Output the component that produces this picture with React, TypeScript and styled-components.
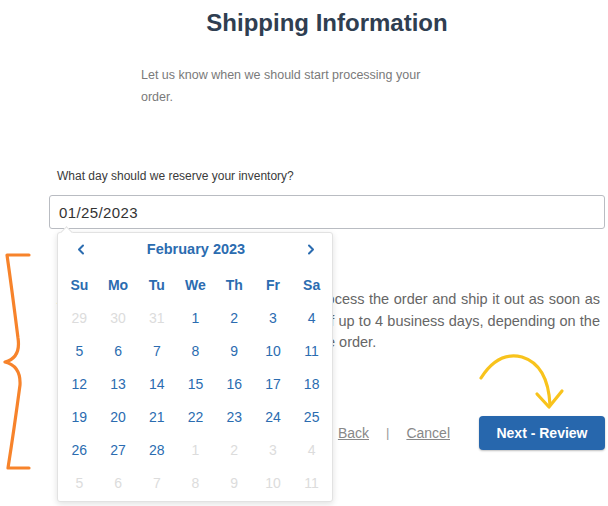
import React from 'react';
import styled, { createGlobalStyle } from 'styled-components';

const GlobalStyle = createGlobalStyle`
  html, body {
    margin: 0;
    padding: 0;
    background: #ffffff;
  }

  body {
    font-family: 'Liberation Sans', Arial, sans-serif;
    color: #333;
  }
`;

const Page = styled.div`
  width: 608px;
  height: 506px;
  overflow: hidden;
  position: relative;
  box-sizing: border-box;
  padding: 8px 3px 0 49px;
`;

const Title = styled.h1`
  margin: 0;
  font-size: 24px;
  line-height: 30px;
  font-weight: 700;
  text-align: center;
  color: #2f3e51;
`;

const Subtitle = styled.p`
  margin: 26px 0 0 92px;
  width: 300px;
  font-size: 12.5px;
  line-height: 22px;
  color: #7a7a7a;
`;

const Label = styled.label`
  display: block;
  margin: 58px 0 0 8px;
  font-size: 12px;
  line-height: 20px;
  color: #3a3a3a;
`;

const Field = styled.div`
  position: relative;
  margin-top: 9px;
`;

const Input = styled.input`
  width: 100%;
  height: 34px;
  box-sizing: border-box;
  padding: 0 9px;
  border: 1px solid #b9bcc2;
  border-radius: 3px;
  font-family: inherit;
  font-size: 15px;
  letter-spacing: 0.4px;
  color: #333;
  outline: none;
`;

const Notice = styled.p`
  margin: 60px 0 0 8px;
  width: 543px;
  font-size: 14.5px;
  line-height: 21.5px;
  color: #666;
`;

const Line = styled.span<{ $fill?: boolean }>`
  display: block;
  white-space: nowrap;
  text-align: left;
  text-align-last: ${(p) => (p.$fill ? 'justify' : 'left')};
`;

const Actions = styled.div`
  display: flex;
  align-items: center;
  justify-content: flex-end;
  margin-top: 62px;
`;

const TextLink = styled.a`
  font-size: 14px;
  color: #888;
  text-decoration: underline;
  cursor: pointer;
`;

const Divider = styled.span`
  margin: 0 17px;
  font-size: 13px;
  color: #9a9a9a;
`;

const PrimaryButton = styled.button`
  margin-left: 29px;
  width: 126px;
  height: 34px;
  border: none;
  border-radius: 4px;
  background: #2767ad;
  color: #fff;
  font-family: inherit;
  font-size: 14px;
  font-weight: 700;
  box-shadow: 0 1px 2px rgba(0, 0, 0, 0.25);
  cursor: pointer;
`;

const Popover = styled.div`
  position: absolute;
  top: 37px;
  left: 8px;
  width: 276px;
  height: 270px;
  box-sizing: border-box;
  padding: 4px 1px 0 2px;
  background: #fff;
  border: 1px solid #e2e2e2;
  border-radius: 3px;
  box-shadow: 0 2px 6px rgba(0, 0, 0, 0.12);

  &::before {
    content: '';
    position: absolute;
    top: -5px;
    left: 4px;
    width: 8px;
    height: 8px;
    background: #fff;
    border-left: 1px solid #e2e2e2;
    border-top: 1px solid #e2e2e2;
    transform: rotate(45deg);
  }
`;

const CalHeader = styled.div`
  display: flex;
  align-items: center;
  justify-content: space-between;
  height: 24px;
  padding: 0 16px 0 17px;
  color: #2b6cb0;
`;

const MonthName = styled.span`
  font-size: 14.5px;
  font-weight: 700;
`;

const NavArrow = styled.svg`
  width: 8px;
  height: 11px;
  cursor: pointer;
`;

const Grid = styled.div`
  display: grid;
  grid-template-columns: repeat(7, 1fr);
  grid-auto-rows: 33px;
  margin-top: 7px;
`;

const DayName = styled.span`
  display: flex;
  align-items: center;
  justify-content: center;
  font-size: 14px;
  font-weight: 700;
  color: #2b6cb0;
`;

const Day = styled.span<{ $muted?: boolean }>`
  display: flex;
  align-items: center;
  justify-content: center;
  font-size: 14px;
  color: ${(p) => (p.$muted ? '#dcdcdc' : '#2b6cb0')};
`;

const Annotation = styled.svg`
  position: absolute;
  pointer-events: none;
`;

const dayNames = ['Su', 'Mo', 'Tu', 'We', 'Th', 'Fr', 'Sa'];

const buildDays = () => {
  const days: { n: number; muted: boolean }[] = [];
  [29, 30, 31].forEach((n) => days.push({ n, muted: true }));
  for (let n = 1; n <= 28; n++) days.push({ n, muted: false });
  for (let n = 1; n <= 11; n++) days.push({ n, muted: true });
  return days;
};

const App = () => (
  <>
    <GlobalStyle />
    <Page>
      <Title>Shipping Information</Title>
      <Subtitle>
        Let us know when we should start processing your order.
      </Subtitle>

      <Label htmlFor="reserve-date">
        What day should we reserve your inventory?
      </Label>
      <Field>
        <Input id="reserve-date" defaultValue="01/25/2023" />
        <Popover>
          <CalHeader>
            <NavArrow viewBox="0 0 8 11">
              <path d="M6 1.5 L2 5.5 L6 9.5" fill="none" stroke="currentColor" strokeWidth="2" strokeLinecap="round" strokeLinejoin="round" />
            </NavArrow>
            <MonthName>February 2023</MonthName>
            <NavArrow viewBox="0 0 8 11">
              <path d="M2 1.5 L6 5.5 L2 9.5" fill="none" stroke="currentColor" strokeWidth="2" strokeLinecap="round" strokeLinejoin="round" />
            </NavArrow>
          </CalHeader>
          <Grid>
            {dayNames.map((d) => (
              <DayName key={d}>{d}</DayName>
            ))}
            {buildDays().map((d, i) => (
              <Day key={i} $muted={d.muted}>
                {d.n}
              </Day>
            ))}
          </Grid>
        </Popover>
      </Field>

      <Notice>
        <Line $fill>After we receive your inventory, we will process the order and ship it out as soon as</Line>
        <Line $fill>possible. Please allow a processing time of up to 4 business days, depending on the</Line>
        <Line>size of your shipment and complexity of the order.</Line>
      </Notice>

      <Actions>
        <TextLink>Back</TextLink>
        <Divider>|</Divider>
        <TextLink>Cancel</TextLink>
        <PrimaryButton>Next - Review</PrimaryButton>
      </Actions>

      <Annotation
        style={{ left: 0, top: 250 }}
        width="40"
        height="225"
        viewBox="0 0 40 225"
      >
        <path
          d="M29 5 L7 5 Q12 40 18 88 Q21 108 5 112 Q21 116 20 135 Q14 180 8 218 L29 218"
          fill="none"
          stroke="#f7832b"
          strokeWidth="3.2"
          strokeLinecap="round"
          strokeLinejoin="round"
        />
      </Annotation>

      <Annotation
        style={{ left: 470, top: 345 }}
        width="110"
        height="75"
        viewBox="0 0 110 75"
      >
        <path
          d="M11 33 Q28 6 52 12 Q78 20 80 60"
          fill="none"
          stroke="#f8c31c"
          strokeWidth="3.2"
          strokeLinecap="round"
        />
        <path
          d="M67 49 L79 62 L92 46"
          fill="none"
          stroke="#f8c31c"
          strokeWidth="3.2"
          strokeLinecap="round"
          strokeLinejoin="round"
        />
      </Annotation>
    </Page>
  </>
);

export default App;
